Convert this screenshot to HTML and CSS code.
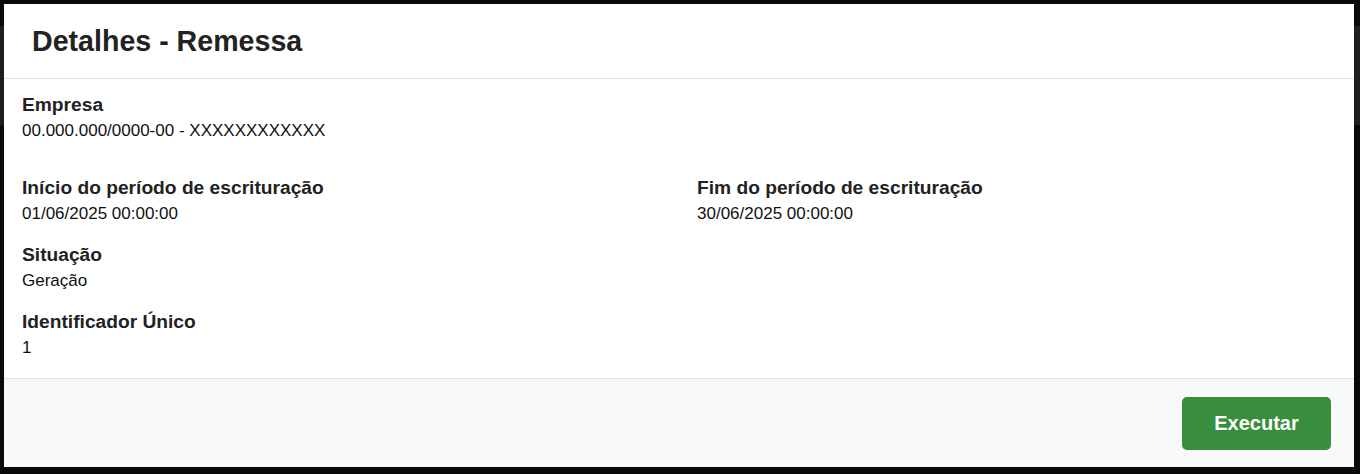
FILE: index.html
```html
<!DOCTYPE html>
<html lang="pt-BR">
<head>
<meta charset="utf-8">
<title>Detalhes - Remessa</title>
<link rel="stylesheet" href="styles.css">
</head>
<body>
<div class="modal">
  <div class="modal-header">
    <h4 class="modal-title">Detalhes - Remessa</h4>
  </div>
  <div class="modal-body">
    <div class="field field-first">
      <div class="label">Empresa</div>
      <div class="value">00.000.000/0000-00 - XXXXXXXXXXXX</div>
    </div>
    <div class="grid">
      <div class="field">
        <div class="label">Início do período de escrituração</div>
        <div class="value">01/06/2025 00:00:00</div>
      </div>
      <div class="field">
        <div class="label">Fim do período de escrituração</div>
        <div class="value">30/06/2025 00:00:00</div>
      </div>
      <div class="field">
        <div class="label">Situação</div>
        <div class="value">Geração</div>
      </div>
      <div class="field empty"></div>
      <div class="field">
        <div class="label">Identificador Único</div>
        <div class="value">1</div>
      </div>
    </div>
  </div>
  <div class="modal-footer">
    <button class="btn-exec" type="button">Executar</button>
  </div>
</div>
</body>
</html>
```

FILE: styles.css
```css
html, body {
  margin: 0;
}
body {
  background: linear-gradient(to bottom, #0a0a0a 0, #0a0a0a 26px, #1e1e1e 26px, #1e1e1e 125px, #0a0a0a 125px);
  padding: 4px 6px 0 4px;
  font-family: "Liberation Sans", Arial, sans-serif;
  color: #212529;
  height: 474px;
  box-sizing: border-box;
}
.modal {
  background: #fff;
  display: flex;
  flex-direction: column;
}
.modal-header {
  padding: 20px 28px;
  border-bottom: 1px solid #dee2e6;
}
.modal-title {
  margin: 0;
  font-size: 28.6px;
  line-height: 34px;
  font-weight: 700;
  color: #222;
}
.modal-body {
  padding: 14px 18px 18px;
}
.field-first {
  margin-bottom: 33px;
}
.grid {
  display: grid;
  grid-template-columns: 1fr 1fr;
  column-gap: 36px;
  row-gap: 17px;
}
.label {
  font-size: 19.2px;
  line-height: 24px;
  font-weight: 700;
  color: #222;
}
.value {
  font-size: 17px;
  line-height: 24px;
  padding-top: 2px;
  color: #111;
}
.modal-footer {
  background: #f8f9fa;
  border-top: 1px solid #dee2e6;
  padding: 18px 23px 17px;
  display: flex;
  justify-content: flex-end;
}
.btn-exec {
  width: 149px;
  height: 53px;
  border: none;
  border-radius: 5px;
  background: #388e3c;
  color: #fff;
  font-family: "Liberation Sans", Arial, sans-serif;
  font-size: 20px;
  font-weight: 700;
  padding: 0;
}
```
